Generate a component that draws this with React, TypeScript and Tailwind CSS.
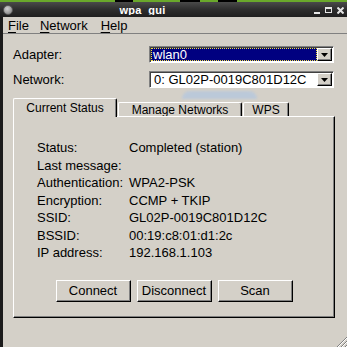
import type { ReactNode } from 'react';

const statusRows: [string, string][] = [
  ['Status:', 'Completed (station)'],
  ['Last message:', ''],
  ['Authentication:', 'WPA2-PSK'],
  ['Encryption:', 'CCMP + TKIP'],
  ['SSID:', 'GL02P-0019C801D12C'],
  ['BSSID:', '00:19:c8:01:d1:2c'],
  ['IP address:', '192.168.1.103'],
];

function MenuItem({ letter, rest, className }: { letter: string; rest: string; className?: string }) {
  return (
    <span className={className}>
      <span className="underline decoration-1 underline-offset-[2px]">{letter}</span>
      {rest}
    </span>
  );
}

function DropButton() {
  return (
    <div className="flex h-full w-[15px] shrink-0 items-center justify-center border-t border-l border-t-white border-l-white border-r border-b border-r-black border-b-black bg-[#d4d0c8] shadow-[inset_-1px_-1px_0_#808080]">
      <svg width="7" height="4" viewBox="0 0 7 4">
        <polygon points="0,0 7,0 3.5,4" fill="#000" />
      </svg>
    </div>
  );
}

function Combo({ children }: { children: ReactNode }) {
  return (
    <div className="flex h-[17px] w-[185px] items-stretch border-t border-l border-t-[#808080] border-l-[#808080] border-r border-b border-r-white border-b-white bg-white p-[1px] shadow-[inset_1px_1px_0_#404040]">
      <div className="flex min-w-0 flex-1 items-center">{children}</div>
      <DropButton />
    </div>
  );
}

function Tab({ label, active, width }: { label: string; active?: boolean; width: string }) {
  return (
    <div
      className={`${width} ${
        active ? 'relative z-10 -mb-[1px] h-[19px] pb-[1px]' : 'h-[14px] pt-[1px]'
      } flex items-center justify-center rounded-t-[2px] border-t border-l border-r border-t-white border-l-white border-r-black bg-[#d4d0c8] text-[12px] leading-none shadow-[inset_-1px_0_0_#808080]`}
    >
      {label}
    </div>
  );
}

function PushButton({ label }: { label: string }) {
  return (
    <button className="flex h-[22px] w-[75px] items-center justify-center border-t border-l border-t-white border-l-white border-r border-b border-r-black border-b-black bg-[#d4d0c8] text-[13px] leading-none shadow-[inset_-1px_-1px_0_#808080]">
      {label}
    </button>
  );
}

export default function App() {
  return (
    <div className="relative flex h-[347px] w-[347px] flex-col overflow-hidden bg-[#d4d0c8] font-['Liberation_Sans',Arial,sans-serif] text-black">
      {/* desktop edge behind the window */}
      <div className="flex h-[2px] shrink-0">
        <div className="w-[115px] bg-[#6aa82b]" />
        <div className="w-[18px] bg-black" />
        <div className="w-[47px] bg-[#6aa82b]" />
        <div className="w-[20px] bg-black" />
        <div className="w-[18px] bg-[#6aa82b]" />
        <div className="w-[19px] bg-black" />
        <div className="flex-1 bg-[#6aa82b]" />
      </div>

      {/* title bar */}
      <div className="flex h-[15px] shrink-0 items-center bg-gradient-to-b from-[#4a4a4a] via-[#2e2e2e] to-[#1f1f1f] pl-[3px] pr-[3px]">
        <div className="h-[10px] w-[10px] rounded-full border border-[#5a5a5a] bg-[radial-gradient(circle_at_40%_35%,#d0d0d0,#7a7a7a)]" />
        <div className="flex flex-1 justify-center pr-[42px]">
          <span className="h-[10px] overflow-hidden text-[11px] font-bold leading-[11px] tracking-[0.3px] text-white">
            wpa_gui
          </span>
        </div>
        <div className="flex items-center gap-[5px] pt-[1px] text-[#e6e6e6]">
          <div className="mt-[5px] h-[2px] w-[6px] bg-[#e6e6e6]" />
          <div className="h-[6px] w-[7px] border border-t-2 border-[#e6e6e6]" />
          <svg width="7" height="7" viewBox="0 0 7 7">
            <path d="M0.5 0.5 L6.5 6.5 M6.5 0.5 L0.5 6.5" stroke="#e6e6e6" strokeWidth="2" />
          </svg>
        </div>
      </div>

      <div className="flex flex-1">
        <div className="w-[3px] bg-[#1b1b1b]" />
        <div className="flex flex-1 flex-col">
          {/* menu bar */}
          <div className="flex h-[17px] shrink-0 items-center border-b border-[#808080] pl-[5px] text-[13px] leading-none">
            <MenuItem letter="F" rest="ile" />
            <MenuItem letter="N" rest="etwork" className="ml-[11px]" />
            <MenuItem letter="H" rest="elp" className="ml-[13px]" />
          </div>

          {/* adapter / network */}
          <div className="mt-[12px] flex items-center pl-[10px] text-[13px] leading-none">
            <span className="w-[136px]">Adapter:</span>
            <Combo>
              <div className="flex h-full flex-1 items-center border border-dotted border-[#f0e040] bg-[#000080] pl-[1px] text-white">
                wlan0
              </div>
            </Combo>
          </div>
          <div className="mt-[8px] flex items-center pl-[10px] text-[13px] leading-none">
            <span className="w-[136px]">Network:</span>
            <Combo>
              <span className="pl-[3px]">0: GL02P-0019C801D12C</span>
            </Combo>
          </div>

          {/* tabs */}
          <div className="mt-[10px] flex items-end gap-[1px] pl-[10px]">
            <Tab label="Current Status" active width="w-[104px]" />
            <Tab label="Manage Networks" width="w-[124px]" />
            <Tab label="WPS" width="w-[46px]" />
          </div>
          <div className="ml-[10px] flex h-[202px] w-[322px] flex-col border-t border-l border-t-white border-l-white border-r border-b border-r-black border-b-black shadow-[inset_-1px_-1px_0_#808080]">
            <div className="flex flex-col pl-[23px] pt-[22px] text-[13px] leading-none">
              {statusRows.map(([label, value]) => (
                <div key={label} className="flex h-[17.5px] items-center">
                  <span className="w-[92px] shrink-0">{label}</span>
                  <span>{value}</span>
                </div>
              ))}
            </div>
            <div className="mt-[18px] flex justify-center gap-[6px]">
              <PushButton label="Connect" />
              <PushButton label="Disconnect" />
              <PushButton label="Scan" />
            </div>
          </div>
        </div>
      </div>

      {/* light blur left over from a tooltip */}
      <div className="absolute left-[182px] top-[91px] h-[8px] w-[75px] rounded-t-full bg-[#b6c8de] opacity-80 blur-[1px]" />

      {/* resize grip */}
      <svg className="absolute bottom-0 right-0" width="12" height="12" viewBox="0 0 12 12">
        <path d="M12 2 L2 12 M12 6 L6 12 M12 10 L10 12" stroke="#808080" strokeWidth="1" />
        <path d="M12 3 L3 12 M12 7 L7 12 M12 11 L11 12" stroke="#ffffff" strokeWidth="1" />
      </svg>
    </div>
  );
}
